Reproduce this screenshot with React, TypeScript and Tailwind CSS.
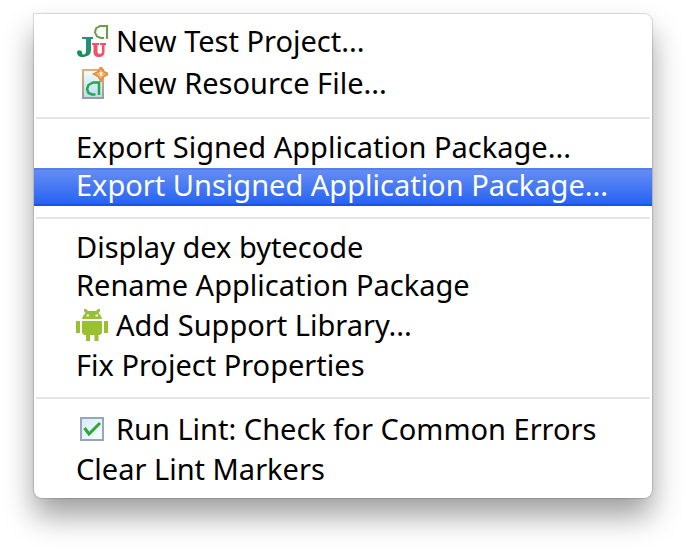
import type { ReactNode } from "react";

const svgProps = {
  width: 32,
  height: 32,
  viewBox: "0 0 32 32",
  fill: "none",
  "aria-hidden": true,
  className: "shrink-0",
} as const;

function TestProjectIcon() {
  return (
    <svg {...svgProps}>
      <defs>
        <linearGradient id="jFill" x1="0" y1="1" x2="1" y2="0">
          <stop offset="0" stopColor="#14924f" />
          <stop offset="1" stopColor="#2b8f86" />
        </linearGradient>
      </defs>
      <path d="M31 14V1H24L20 3.500L19 7.500L21 11.500L25 13H28" stroke="#679f45" strokeWidth="2" />
      <path d="M6 12H17V14H15V25C15 30 11 32 6 32C3 32 1 30 1 27.500C1 25 5 24.500 6 27L6.500 29.500C9 30 10 29 10 25V14H6Z" fill="url(#jFill)" />
      <path d="M16 18H23V20H21.500V27C21.500 29.500 26 29.500 26 27V20H24V18H30V20H28.500V27C28.500 30.500 26 32 23 32C19.500 32 17.500 30.500 17.500 27V20H16Z" fill="#f4506b" />
    </svg>
  );
}

function ResourceFileIcon() {
  return (
    <svg {...svgProps}>
      <defs>
        <linearGradient id="pageEdge" x1="0" y1="0" x2="0" y2="1">
          <stop offset="0" stopColor="#e3ad78" />
          <stop offset="1" stopColor="#9c9c98" />
        </linearGradient>
        <linearGradient id="pageFill" x1="0" y1="0" x2="0" y2="1">
          <stop offset="0" stopColor="#f4fafd" />
          <stop offset="1" stopColor="#b5e0ee" />
        </linearGradient>
      </defs>
      <rect x="7" y="3" width="20" height="28" fill="url(#pageFill)" stroke="url(#pageEdge)" strokeWidth="2" />
      <path d="M23 28V15.500H17L12.500 18L11 22L12.500 26L16 27.500H19.500" stroke="#2da44f" strokeWidth="2.500" />
      <path d="M25 0L27.500 4.500L32 7L27.500 9.500L25 14L22.500 9.500L18 7L22.500 4.500Z" fill="#fbd3a4" stroke="#e58c3d" strokeWidth="2" />
      <path d="M25 3V11M21 7H29" stroke="#ee9b4e" strokeWidth="1" />
      <path d="M24 5H26V9H24Z" fill="#fff3df" />
    </svg>
  );
}

function AndroidIcon() {
  return (
    <svg {...svgProps}>
      <g fill="#99bf32">
        <path d="M8 0H10L12 2H20L22 0H24V2L22.500 4L25 7L26 10H6L7 7L9.500 4L8 2Z" />
        <path d="M6 12H26V24L24 26H22.500V32H18.500V26H14V32H10V26H8L6 24Z" />
        <rect y="12" width="4" height="12" />
        <rect x="28" y="12" width="4" height="12" />
      </g>
      <path d="M10.500 5.500H13V7.500H10.500ZM19.500 5.500H22V7.500H19.500Z" fill="#f2f7e0" />
    </svg>
  );
}

function LintIcon() {
  return (
    <svg {...svgProps}>
      <defs>
        <linearGradient id="boxFill" x1="0" y1="0" x2="1" y2="1">
          <stop offset="0" stopColor="#d4ecf8" />
          <stop offset="1" stopColor="#fafdff" />
        </linearGradient>
      </defs>
      <rect x="5" y="5" width="22" height="22" fill="url(#boxFill)" stroke="#98a5bc" strokeWidth="2" />
      <path d="M8.500 15L13 21L24 10" stroke="#2fa53a" strokeWidth="3" />
    </svg>
  );
}

type ItemProps = { label: string; icon?: ReactNode; size?: "tall" | "medium" | "short"; selected?: boolean };

const heights = { tall: "h-[42px] pb-1", medium: "h-10 pb-0.5", short: "h-[38px] pb-1" };

function Item({ label, icon, size = "medium", selected = false }: ItemProps) {
  const tone = selected
    ? "border-y-2 border-t-[#557fe9] border-b-[#1655e5] bg-linear-to-b from-[#648cf5] to-[#2463f1] text-white"
    : "text-black";
  return (
    <button
      type="button"
      role="menuitem"
      className={`flex w-full items-center gap-2 pl-[42px] text-left whitespace-nowrap ${heights[size]} ${tone}`}
    >
      {icon}
      <span>{label}</span>
    </button>
  );
}

function Separator() {
  return <hr className="mx-0.5 my-[11px] h-0.5 border-0 bg-[#e4e4e4]" />;
}

export default function App() {
  return (
    <main className="min-h-screen bg-white px-[34px] pt-3.5 pb-[54px]">
      <div
        role="menu"
        className="rounded-lg rounded-tl-none bg-white py-2 font-['Noto_Sans','Lucida_Grande',sans-serif] text-[29px] leading-8 font-[430] shadow-[0_0_1px_1px_rgba(0,0,0,0.14),0_18px_30px_rgba(0,0,0,0.38)]"
      >
        <Item size="tall" label="New Test Project..." icon={<TestProjectIcon />} />
        <Item size="tall" label="New Resource File..." icon={<ResourceFileIcon />} />
        <Separator />
        <Item size="short" label="Export Signed Application Package..." />
        <Item size="short" label="Export Unsigned Application Package..." selected />
        <Separator />
        <Item size="short" label="Display dex bytecode" />
        <Item size="short" label="Rename Application Package" />
        <Item label="Add Support Library..." icon={<AndroidIcon />} />
        <Item label="Fix Project Properties" />
        <Separator />
        <Item label="Run Lint: Check for Common Errors" icon={<LintIcon />} />
        <Item label="Clear Lint Markers" />
      </div>
    </main>
  );
}
